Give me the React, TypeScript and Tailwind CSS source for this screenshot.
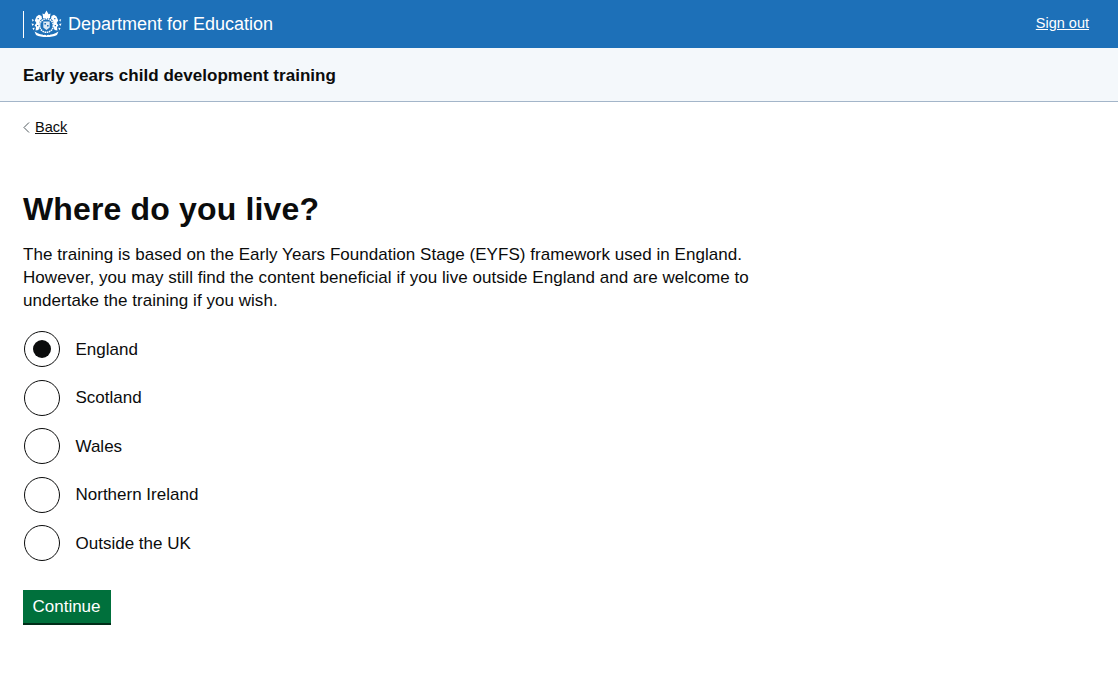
import React from "react";

const options = ["England", "Scotland", "Wales", "Northern Ireland", "Outside the UK"];

// rough version of the royal arms, drawn as small white blobs
const Crest = () => (
  <svg width="31" height="28" viewBox="0 0 31 28" fill="#fff" aria-hidden="true">
    <path d="M12 6.5 L11.4 3.4 L13.4 4.2 L15.5 0.5 L17.6 4.2 L19.6 3.4 L19 6.5 L19 8 H12 Z" />
    <circle cx="15.5" cy="15.5" r="6.8" fill="none" stroke="#fff" strokeWidth="1.5" strokeDasharray="1.6 0.6" />
    <path d="M12.3 11.5h6.4v6l-3.2 2.6-3.2-2.6z" opacity="0.85" />
    <path d="M13.4 13h1.6v1.6h-1.6zM16 15h1.6v1.6H16z" fill="#1d70b8" />
    <path d="M5.5 6.5 L8 4.8 L10.5 6 L11 8.8 L9 10.5 L8.6 12.5 L8.6 17 L7.4 20 L4.6 20.5 L5 17 L3.6 15.4 L5.4 13 L3.8 10.6 Z" />
    <path d="M25.5 6.5 L23 4.8 L20.5 6 L20 8.8 L22 10.5 L22.4 12.5 L22.4 17 L23.6 20 L26.4 20.5 L26 17 L27.4 15.4 L25.6 13 L27.2 10.6 Z" />
    <path d="M6.6 8h1.2v1.2H6.6zM23.2 8h1.2v1.2h-1.2zM6 15h1.3v1.3H6zM23.7 15H25v1.3h-1.3z" fill="#1d70b8" />
    <path d="M0.8 9l2.2 1-1.4 1.8zM30.2 9l-2.2 1 1.4 1.8zM0.5 13.5l2.6.4-1.6 2zM30.5 13.5l-2.6.4 1.6 2zM1.4 18l2.4-.2-1.2 2.4zM29.6 18l-2.4-.2 1.2 2.4z" />
    <path d="M3.5 21.5 C8 24.2 11 25 15.5 25 C20 25 23 24.2 27.5 21.5 L26 25 C21 27.8 10 27.8 5 25 Z" />
    <path d="M8 22.5h1v1H8zM12 24h1v1h-1zM15 24.4h1v1h-1zM18 24h1v1h-1zM22 22.5h1v1h-1z" fill="#1d70b8" />
  </svg>
);

export default function App() {
  return (
    <div className="min-h-[688px] bg-white font-['Liberation_Sans',Arial,sans-serif] text-[#0b0c0c]">
      <header className="flex h-12 items-center justify-between bg-[#1d70b8] pl-[23px] pr-[29px] text-white">
        <div className="flex items-center">
          <span className="h-[27px] w-px bg-white" />
          <span className="ml-[7px] flex">
            <Crest />
          </span>
          <span className="ml-[6px] text-[18px]">Department for Education</span>
        </div>
        <a href="#" className="text-[14.5px] underline">Sign out</a>
      </header>

      <div className="flex h-[54px] items-center border-b border-[#a3b5c9] bg-[#f4f8fb] px-[23px] pt-0.5">
        <span className="text-[17px] font-bold tracking-[0.03px]">Early years child development training</span>
      </div>

      <main className="px-[23px]">
        <a href="#" className="mt-[15px] flex w-fit items-center text-[14.5px] leading-5">
          <svg width="7" height="11" viewBox="0 0 7 11" fill="none" stroke="#505a5f" strokeWidth="1" className="mr-[5px]">
            <path d="M6 0.5 L1 5.5 L6 10.5" />
          </svg>
          <span className="underline">Back</span>
        </a>

        <h1 className="mt-[50px] text-[32px] font-bold leading-[44px] tracking-[0.15px]">Where do you live?</h1>

        <p className="mt-[12px] w-[740px] text-[17px] leading-[23px] tracking-[0.04px]">
          The training is based on the Early Years Foundation Stage (EYFS) framework used in England.
          However, you may still find the content beneficial if you live outside England and are welcome to
          undertake the training if you wish.
        </p>

        <div className="mt-[19px] flex flex-col gap-[12.5px]">
          {options.map((name, i) => (
            <label key={name} className="flex h-9 items-center pl-px">
              <span className="flex h-9 w-9 items-center justify-center rounded-full border border-[#0b0c0c]">
                {i === 0 && <span className="h-[18px] w-[18px] rounded-full bg-[#0b0c0c]" />}
              </span>
              <span className="ml-[15.5px] text-[17px] leading-none">{name}</span>
            </label>
          ))}
        </div>

        <button className="mt-[29px] h-[35px] w-[88px] border-b-2 border-[#002d18] bg-[#00703c] pr-px text-[17px] text-white">
          Continue
        </button>
      </main>
    </div>
  );
}
